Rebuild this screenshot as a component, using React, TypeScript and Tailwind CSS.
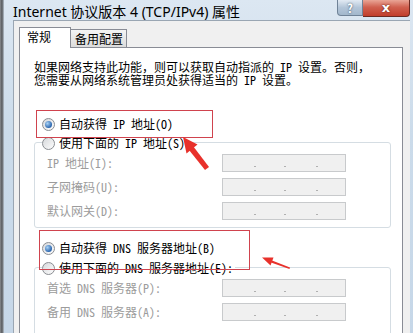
const cjk = "font-['Noto_Sans_Mono_CJK_SC','Noto_Sans_CJK_SC',sans-serif]";

function Radio({ checked }: { checked?: boolean }) {
  return (
    <span className="w-[13px] h-[13px] shrink-0 rounded-full border border-[#8a8d92] bg-[linear-gradient(135deg,#d6d8db,#fdfdfd)] flex items-center justify-center">
      {checked && (
        <span className="w-[7px] h-[7px] rounded-full bg-[radial-gradient(circle_at_35%_35%,#a8d2f5,#2a64ad_70%)]" />
      )}
    </span>
  );
}

function IpBox() {
  return (
    <div className="w-[124px] h-[18px] border border-[#c8cacc] bg-[#f0f0f0] flex items-end pb-[4px]">
      <span className="ml-[31px] w-[2px] h-[1px] bg-[#b0b0b0]" />
      <span className="ml-[28px] w-[2px] h-[1px] bg-[#b0b0b0]" />
      <span className="ml-[30px] w-[2px] h-[1px] bg-[#b0b0b0]" />
    </div>
  );
}

function Field({ label }: { label: string }) {
  return (
    <div className="h-[18px] flex items-center">
      <span className="w-[187px] pl-[12px] text-[12px] leading-[12px] text-[#9c9c9c]">{label}</span>
      <IpBox />
    </div>
  );
}

function Group({ legend, fields, height }: { legend: string; fields: string[]; height: string }) {
  return (
    <div className={`relative w-[357px] border border-[#d5dde3] rounded-[3px] pt-[11px] flex flex-col gap-[6px] ${height}`}>
      <div className="absolute left-[7px] -top-[8px] bg-white pr-[2px] flex items-center gap-[4px] h-[16px]">
        <Radio />
        <span className="text-[12px] leading-[12px] text-black">{legend}</span>
      </div>
      {fields.map(f => (
        <Field key={f} label={f} />
      ))}
    </div>
  );
}

export default function App() {
  return (
    <div className={`relative w-[413px] h-[333px] overflow-hidden flex ${cjk}`}>
      <div className="w-[4px] bg-[linear-gradient(90deg,#8a8d91,#55585c_50%,#b9c4cf)]" />
      <div className="flex-1 flex flex-col bg-[linear-gradient(180deg,#dce7f2,#cbdbea_40%,#c6d7e8)] pl-[9px] pr-[3px]">
        <div className="h-[25px] flex justify-between">
          <span className="pt-[4px] text-[14px] leading-[16px] text-black font-['Noto_Sans','Noto_Sans_CJK_SC',sans-serif]">
            Internet 协议版本 4 (TCP/IPv4) 属性
          </span>
          <div className="flex h-[17px]">
            <div className="w-[26px] h-[16px] border border-[#6f8297] border-t-0 rounded-bl-[4px] bg-[linear-gradient(180deg,#e2eaf3,#b3c5d8_50%,#a2b7cc)] flex items-center justify-center text-white text-[12px] font-bold [text-shadow:0_0_2px_#2b3d52]">
              ?
            </div>
            <div className="w-[47px] h-[17px] border border-[#6b2a22] border-t-0 border-l-0 rounded-br-[4px] bg-[linear-gradient(180deg,#e9a596,#d0604f_45%,#c13e2c)] flex items-center justify-center text-white text-[13px] font-bold font-['DejaVu_Sans',sans-serif] [text-shadow:0_0_2px_#4a1008]">
              x
            </div>
          </div>
        </div>
        <div className="flex-1 flex flex-col bg-[#f0f0f0] border-l border-t border-[#9aa6b3] pl-[5px] pt-[6px] pr-[7px]">
          <div className="flex items-end h-[20px]">
            <div className="relative z-10 -mb-px w-[52px] h-[21px] bg-white border border-b-0 border-[#898c95] pl-[7px] pt-[2px] text-[12px] leading-[14px] text-black">
              常规
            </div>
            <div className="w-[56px] h-[18px] border border-l-0 border-b-0 border-[#898c95] bg-[linear-gradient(180deg,#f4f4f4,#dcdcdc)] pl-[4px] pt-[2px] text-[12px] leading-[14px] text-black">
              备用配置
            </div>
          </div>
          <div className="flex-1 bg-white border border-[#898c95] pt-[12px] pl-[14px]">
            <p className="text-[12px] leading-[13px] text-black">
              如果网络支持此功能，则可以获取自动指派的 IP 设置。否则，
              <br />
              您需要从网络系统管理员处获得适当的 IP 设置。
            </p>
            <div className="mt-[30px] h-[16px] pl-[8px] flex items-center gap-[4px]">
              <Radio checked />
              <span className="text-[12px] leading-[12px] text-black">自动获得 IP 地址(O)</span>
            </div>
            <div className="mt-[10px]">
              <Group legend="使用下面的 IP 地址(S)" fields={["IP 地址(I):", "子网掩码(U):", "默认网关(D):"]} height="h-[86px]" />
            </div>
            <div className="mt-[12px] h-[16px] pl-[8px] flex items-center gap-[4px]">
              <Radio checked />
              <span className="text-[12px] leading-[12px] text-black">自动获得 DNS 服务器地址(B)</span>
            </div>
            <div className="mt-[11px]">
              <Group legend="使用下面的 DNS 服务器地址(E):" fields={["首选 DNS 服务器(P):", "备用 DNS 服务器(A):"]} height="h-[80px]" />
            </div>
          </div>
        </div>
      </div>

      {/* annotations */}
      <div className="absolute left-[36px] top-[110px] w-[177px] h-[28px] border border-[#d0434e]" />
      <div className="absolute left-[39px] top-[230px] w-[211px] h-[40px] border border-[#d0434e]" />
      <svg className="absolute left-0 top-0" width="413" height="333" viewBox="0 0 413 333">
        <polygon points="209,167 205,170 189,150 193,146" fill="#e8312b" />
        <polygon points="183,137 197.5,144.5 186.5,153.5" fill="#e8312b" />
        <polygon points="290,267.5 289.5,269 271,262.5 272,260.5" fill="#e8312b" />
        <polygon points="262,257.5 273.5,257.5 270.5,265.5" fill="#e8312b" />
      </svg>
    </div>
  );
}
